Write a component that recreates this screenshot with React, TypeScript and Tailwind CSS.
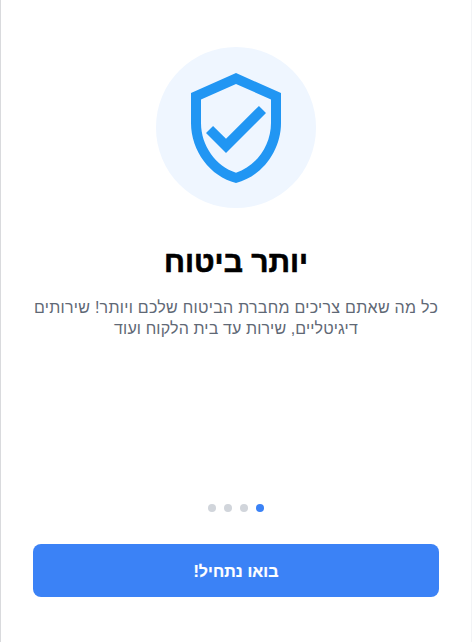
const dots = [true, false, false, false];

export default function App() {
  return (
    <main dir="rtl" className="flex h-[642px] w-[472px] flex-col items-center border-r border-l border-r-[#f3f4f6] border-l-[#d9dadd] bg-white px-8 pt-[47px] font-['Liberation_Sans',sans-serif]">
      <div className="flex h-[161px] w-[160px] shrink-0 items-center justify-center rounded-full bg-[#eff6ff]">
        <svg viewBox="0 0 24 24" className="h-[120px] w-[120px]" fill="#2196f3">
          <path d="M12 1 3 5v6c0 5.55 3.84 10.74 9 12 5.16-1.26 9-6.45 9-12V5l-9-4zm7 10c0 4.52-2.98 8.69-7 9.93-4.02-1.23-7-5.41-7-9.93V6.3l7-3.11 7 3.11V11zm-11.59.59L6 13l4 4 8-8-1.41-1.42L10 14.17z" />
        </svg>
      </div>
      <h1 className="mt-[36px] text-[30px] leading-9 font-bold text-black [-webkit-text-stroke:0.6px_black]">יותר ביטוח</h1>
      <p className="mt-[17px] h-[42px] text-center text-[16px] leading-[21px] whitespace-nowrap text-[#5f6875]">
        <span className="block tracking-[0.28px]">כל מה שאתם צריכים מחברת הביטוח שלכם ויותר! שירותים</span>
        <span className="block tracking-[0.13px]">דיגיטליים, שירות עד בית הלקוח ועוד</span>
      </p>
      <div className="mt-auto flex gap-2">
        {dots.map((active, i) => (
          <span key={i} className={active ? "h-2 w-2 rounded-full bg-[#3b82f6]" : "h-2 w-2 rounded-full bg-[#d1d5db]"} />
        ))}
      </div>
      <button className="mt-8 mb-[45px] h-[53px] w-full shrink-0 rounded-lg bg-[#3b82f6] pt-0.5 text-[16px] font-bold tracking-[0.1px] text-white [-webkit-text-stroke:0.2px_white]">בואו נתחיל!</button>
    </main>
  );
}
